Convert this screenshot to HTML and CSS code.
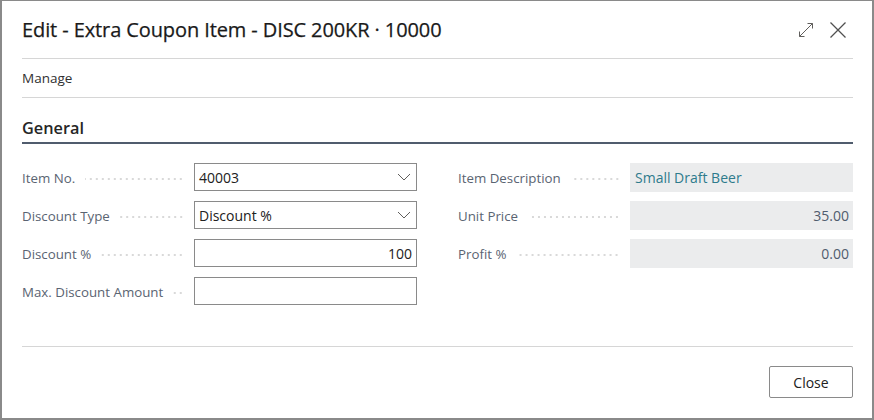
FILE: index.html
```html
<!DOCTYPE html>
<html lang="en">
<head>
<meta charset="utf-8">
<title>Edit - Extra Coupon Item</title>
<link rel="stylesheet" href="styles.css">
</head>
<body>
<div class="dialog">
  <div class="header">
    <h1 class="title">Edit - Extra Coupon Item - DISC 200KR · 10000</h1>
    <div class="header-icons">
      <svg class="icon-expand" width="16" height="16" viewBox="0 0 16 16" aria-hidden="true">
        <path d="M1.5 14.5 L14.5 1.5 M9.5 1.5 H14.5 V6.5 M1.5 9.5 V14.5 H6.5" fill="none" stroke="#605e5c" stroke-width="1"/>
      </svg>
      <svg class="icon-close" width="16" height="16" viewBox="0 0 16 16" aria-hidden="true">
        <path d="M0.5 0.5 L15.5 15.5 M15.5 0.5 L0.5 15.5" fill="none" stroke="#505050" stroke-width="1.3"/>
      </svg>
    </div>
  </div>
  <div class="actions">Manage</div>
  <div class="section-title">General</div>
  <div class="fields">
    <div class="col">
      <div class="row">
        <div class="label"><span>Item No.</span><span class="leader"></span></div>
        <div class="input select"><span>40003</span><svg width="14" height="8" viewBox="0 0 14 8"><path d="M1 1 L7 7 L13 1" fill="none" stroke="#605e5c" stroke-width="1"/></svg></div>
      </div>
      <div class="row">
        <div class="label"><span>Discount Type</span><span class="leader"></span></div>
        <div class="input select"><span>Discount %</span><svg width="14" height="8" viewBox="0 0 14 8"><path d="M1 1 L7 7 L13 1" fill="none" stroke="#605e5c" stroke-width="1"/></svg></div>
      </div>
      <div class="row">
        <div class="label"><span>Discount %</span><span class="leader"></span></div>
        <div class="input num"><span>100</span></div>
      </div>
      <div class="row">
        <div class="label"><span>Max. Discount Amount</span><span class="leader"></span></div>
        <div class="input"></div>
      </div>
    </div>
    <div class="col">
      <div class="row">
        <div class="label"><span>Item Description</span><span class="leader"></span></div>
        <div class="readonly link">Small Draft Beer</div>
      </div>
      <div class="row">
        <div class="label"><span>Unit Price</span><span class="leader"></span></div>
        <div class="readonly num">35.00</div>
      </div>
      <div class="row">
        <div class="label"><span>Profit %</span><span class="leader"></span></div>
        <div class="readonly num">0.00</div>
      </div>
    </div>
  </div>
  <div class="footer">
    <button class="btn">Close</button>
  </div>
</div>
</body>
</html>
```

FILE: styles.css
```css
* { box-sizing: border-box; }
html, body { margin: 0; padding: 0; background: #ffffff; }
body {
  font-family: "Open Sans", "Noto Sans", "Liberation Sans", sans-serif;
  color: #212121;
}
.dialog {
  width: 874px;
  height: 420px;
  border-style: solid;
  border-color: #8a8a8a;
  border-width: 1px 2px 2px 2px;
  padding: 0 19px 0 20px;
  display: flex;
  flex-direction: column;
}
.header {
  height: 58px;
  display: flex;
  align-items: center;
  border-bottom: 1px solid #d6d6d6;
}
.title {
  margin: 0;
  font-size: 20px;
  font-weight: 400;
  color: #1a1a1a;
  letter-spacing: -0.1px;
  -webkit-text-stroke: 0.25px #1a1a1a;
}
.header-icons {
  margin-left: auto;
  margin-right: 7px;
  display: flex;
  align-items: center;
  gap: 16px;
}
.icon-expand { display: block; }
.icon-close { display: block; }
.actions {
  height: 39px;
  display: flex;
  align-items: center;
  font-size: 13.5px;
  color: #303030;
  border-bottom: 1px solid #d6d6d6;
}
.section-title {
  height: 46px;
  display: flex;
  align-items: flex-end;
  padding-bottom: 3px;
  font-size: 16.3px;
  font-weight: 600;
  color: #262626;
  border-bottom: 2px solid #505c6d;
}
.fields {
  flex: 1;
  display: grid;
  grid-template-columns: 395px 395px;
  column-gap: 41px;
  padding-top: 19px;
  align-content: start;
}
.col {
  display: flex;
  flex-direction: column;
  gap: 10px;
}
.row {
  display: flex;
  height: 28px;
  align-items: center;
}
.label {
  width: 172px;
  display: flex;
  align-items: center;
  font-size: 13.3px;
  color: #5a6472;
  white-space: nowrap;
  padding-top: 1px;
}
.leader {
  flex: 1;
  height: 2px;
  margin: 3px 10px 0 10px;
  background-image: radial-gradient(circle, #c4c4c4 0.6px, transparent 0.9px);
  background-size: 6px 2px;
  background-position: right center;
  background-repeat: repeat-x;
}
.input {
  width: 223px;
  height: 28px;
  border: 1px solid #8a8a8a;
  display: flex;
  align-items: center;
  padding: 0 5px 0 4px;
  font-size: 14px;
  color: #212121;
}
.input.select { justify-content: space-between; }
.input.num { justify-content: flex-end; padding-right: 4px; }
.readonly {
  width: 223px;
  height: 29px;
  background: #ebeced;
  display: flex;
  align-items: center;
  padding: 0 5px;
  font-size: 14px;
  color: #505c6d;
}
.readonly.link { color: #2e7b8c; }
.readonly.num { justify-content: flex-end; padding-right: 4px; }
.footer {
  height: 72px;
  border-top: 1px solid #d6d6d6;
  display: flex;
  justify-content: flex-end;
  align-items: flex-start;
  padding-top: 19px;
}
.btn {
  width: 84px;
  height: 32px;
  border: 1px solid #8a8a8a;
  border-radius: 2px;
  background: #ffffff;
  font-family: inherit;
  font-size: 14px;
  color: #212121;
  padding: 0;
}
```
